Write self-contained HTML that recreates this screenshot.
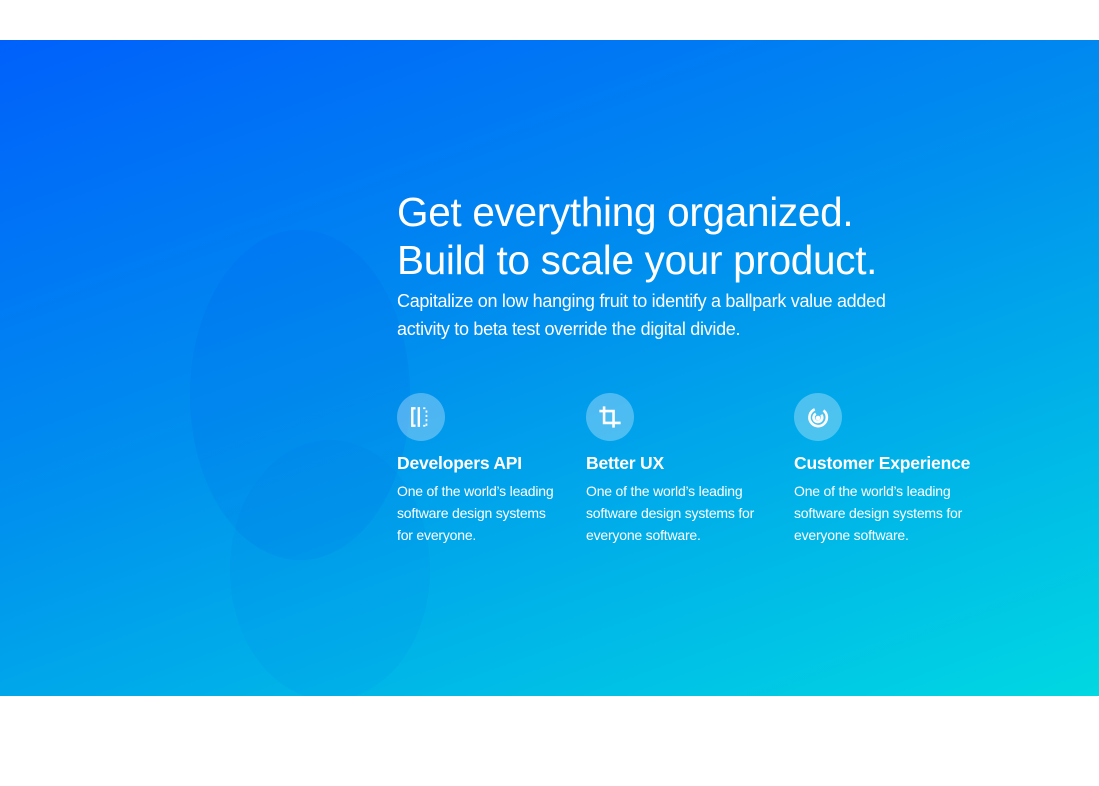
<!DOCTYPE html>
<html><head><style>
body{margin:0;width:1099px;height:786px;background:#fff;overflow:hidden;font-family:"Liberation Sans",sans-serif;}
.hero{position:absolute;left:0;top:40px;width:1099px;height:656px;background:linear-gradient(160deg,#0060fb 0%,#0090ee 45%,#00d8e2 100%);overflow:hidden;}
.blob{position:absolute;border-radius:50%;background:rgba(0,70,230,0.08);}
h1{position:absolute;left:397px;top:148px;margin:0;color:#fff;font-weight:normal;font-size:40.5px;line-height:48px;letter-spacing:-0.3px;}
p.lead{position:absolute;left:397px;top:247px;margin:0;color:#fff;font-size:18px;line-height:28px;width:515px;letter-spacing:-0.3px;}
.f{position:absolute;top:353px;color:#fff;}
.ic{width:48px;height:48px;border-radius:50%;background:rgba(255,255,255,0.3);display:flex;align-items:center;justify-content:center;}
.f h3{margin:12px 0 6px;font-size:17.5px;font-weight:bold;letter-spacing:-0.2px;}
.f div.t{font-size:14px;line-height:22px;letter-spacing:-0.2px;}
</style></head><body>
<div class="hero">
<div class="blob" style="left:190px;top:190px;width:220px;height:330px;"></div>
<div class="blob" style="left:230px;top:400px;width:200px;height:260px;opacity:.6"></div>
<h1>Get everything organized.<br>Build to scale your product.</h1>
<p class="lead">Capitalize on low hanging fruit to identify a ballpark value added activity to beta test override the digital divide.</p>
<div class="f" style="left:397px"><div class="ic"><svg width="24" height="24" viewBox="0 0 22 22" fill="none" stroke="#fff" stroke-width="2.2"><path d="M6 3H3v16h3M9 2v18"/><path d="M13 3h2M16 5v2M16 9v2M16 13v2M16 17v2M13 19h2" stroke-width="1.6"/></svg></div><h3>Developers API</h3><div class="t">One of the world’s leading<br>software design systems<br>for everyone.</div></div>
<div class="f" style="left:586px"><div class="ic"><svg width="26" height="26" viewBox="0 0 22 22" fill="none" stroke="#fff" stroke-width="2.2"><path d="M6 2v14h14M2 6h12v14"/></svg></div><h3>Better UX</h3><div class="t">One of the world’s leading<br>software design systems for<br>everyone software.</div></div>
<div class="f" style="left:794px"><div class="ic"><svg width="24" height="24" viewBox="0 0 22 22" fill="none" stroke="#fff" stroke-width="2.4"><path d="M8 4A8 8 0 1 0 16 5"/><path d="M9 8a4 4 0 1 0 5 1"/><circle cx="11" cy="12" r="1" fill="#fff"/></svg></div><h3>Customer Experience</h3><div class="t">One of the world’s leading<br>software design systems for<br>everyone software.</div></div>
</div>
</body></html>
